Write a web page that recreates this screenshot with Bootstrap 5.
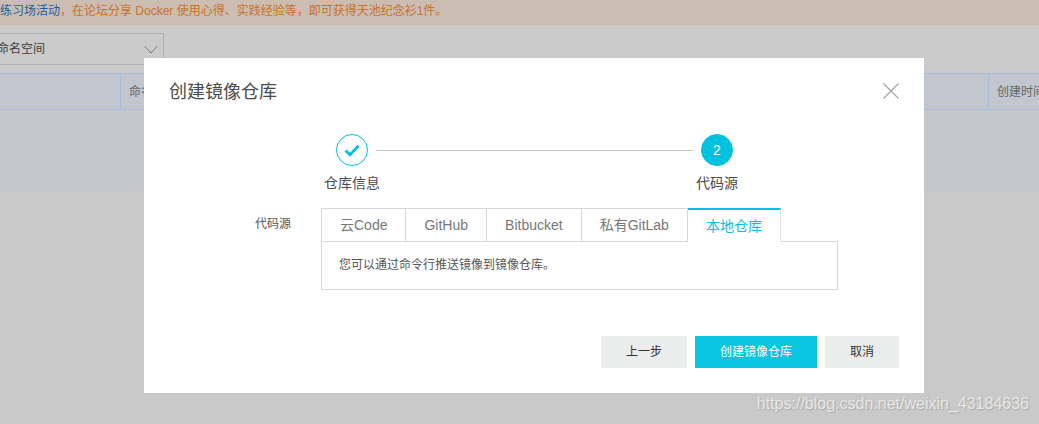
<!DOCTYPE html>
<html lang="en">
<head>
  <meta charset="UTF-8" />
  <meta name="viewport" content="width=device-width, initial-scale=1" />
  <title>创建镜像仓库</title>
  <link href="https://cdn.jsdelivr.net/npm/bootstrap@5.3.3/dist/css/bootstrap.min.css" rel="stylesheet" />
  <style>
    html, body {
      height: 100%;
    }
    body {
      background: #c9c9c9;
      font-family: "Liberation Sans", "Noto Sans CJK SC", sans-serif;
      font-size: 12px;
      color: #333;
      overflow: hidden;
      position: relative;
    }
    .notice-bar {
      height: 25px;
      line-height: 23px;
      background: #cbbdb2;
      color: #c8722c;
      white-space: nowrap;
    }
    .notice-bar a {
      color: #1f5d9e;
      text-decoration: none;
    }
    .bg-panel {
      height: 167px;
      background: #cbcbcb;
      padding-top: 8px;
    }
    .ns-select {
      width: 167px;
      height: 32px;
      margin-left: -3px;
      border: 1px solid #aeaeae;
      border-left: 0;
      color: #3d3d3d;
    }
    .ns-select svg {
      margin-right: 5px;
    }
    .bg-thead {
      height: 37px;
      margin-top: 8px;
      background: #c1c6cf;
      border-top: 1px solid #a9bfd9;
      border-bottom: 1px solid #a9bfd9;
      color: #666;
    }
    .bg-thead div {
      padding-left: 8px;
    }
    .bg-tbody {
      height: 82px;
      background: #c5c6c8;
    }
    .th-first {
      width: 121px;
      border-right: 1px solid #a9bfd9;
    }
    .th-last {
      width: 51px;
      flex: none;
      white-space: nowrap;
      border-left: 1px solid #a9bfd9;
    }
    .dlg {
      position: absolute;
      left: 144px;
      top: 58px;
      width: 780px;
      height: 335px;
      background: #fff;
    }
    .dlg-head {
      height: 66px;
      padding: 0 25px;
    }
    .dlg-title {
      font-size: 18px;
      color: #4a4a4a;
      margin: 4px 0 0;
      font-weight: 400;
    }
    .stepper {
      width: 465px;
      margin: 10px 0 0 158px;
    }
    .step-item {
      width: 100px;
      position: relative;
      z-index: 1;
    }
    .step-dot {
      width: 32px;
      height: 32px;
      border-radius: 50%;
      border: 1px solid #00c1de;
      color: #00c1de;
    }
    .step-dot.on {
      background: #00c1de;
      color: #fff;
      font-size: 14px;
    }
    .step-name {
      font-size: 14px;
      line-height: 20px;
      margin-top: 7px;
      color: #4a4a4a;
    }
    .step-line {
      height: 1px;
      background: #c4c4c4;
      margin: 16px -26px 0;
    }
    .source-row {
      margin-top: 15px;
    }
    .source-label {
      width: 177px;
      padding: 7px 30px 0 0;
      line-height: 18px;
      text-align: right;
      color: #555;
    }
    .source-tabs {
      width: 517px;
    }
    .source-tabs .nav-tabs {
      border-bottom: 0;
      height: 34px;
      position: relative;
      z-index: 1;
    }
    .source-tabs .nav-link {
      height: 34px;
      padding: 0 18px;
      line-height: 33px;
      font-size: 14px;
      color: #777;
      margin: 0;
      border: 1px solid #d7d7d7;
      border-left: 0;
      border-radius: 0;
      background: #fff;
    }
    .source-tabs .nav-item:first-child .nav-link {
      border-left: 1px solid #d7d7d7;
    }
    .source-tabs .nav-link.active {
      color: #00c1de;
      border-top: 2px solid #00c1de;
      border-bottom-color: #fff;
      line-height: 32px;
    }
    .tab-box {
      height: 49px;
      margin-top: -1px;
      padding: 14px 17px;
      line-height: 18px;
      border: 1px solid #d7d7d7;
      color: #555;
    }
    .dlg-foot {
      margin-top: 46px;
      padding-right: 25px;
      gap: 8px;
    }
    .dlg-foot .btn {
      height: 32px;
      padding: 0;
      font-size: 12px;
      border: 0;
      border-radius: 0;
      color: #333;
      background: #ebecec;
    }
    .dlg-foot .btn.go {
      background: #09c5e0;
      color: #fff;
    }
    .btn-back { width: 86px; }
    .btn-make { width: 122px; }
    .btn-quit { width: 74px; }
    .watermark {
      position: absolute;
      right: 10px;
      top: 394px;
      font-size: 16px;
      line-height: 20px;
      color: #e6e6e6;
      text-shadow: 1px 1px 1px #a8a8a8;
    }
  </style>
</head>
<body>
  <!-- page behind the dialog -->
  <div class="notice-bar"><a href="#">练习场活动</a>，在论坛分享 Docker 使用心得、实践经验等，即可获得天池纪念衫1件。</div>
  <div class="bg-panel">
    <div class="ns-select d-flex align-items-center justify-content-between">
      <span>命名空间</span>
      <svg width="14" height="9" viewBox="0 0 14 9"><path d="M.5 1 7 8l6.5-7" fill="none" stroke="#777" stroke-width="1"/></svg>
    </div>
    <div class="bg-thead d-flex align-items-center">
      <div class="th-first h-100"></div>
      <div class="flex-fill">命名</div>
      <div class="th-last h-100 d-flex align-items-center">创建时间</div>
    </div>
    <div class="bg-tbody"></div>
  </div>

  <!-- dialog -->
  <div class="dlg">
    <div class="dlg-head d-flex align-items-center justify-content-between">
      <h5 class="dlg-title">创建镜像仓库</h5>
      <svg width="16" height="16" viewBox="0 0 16 16"><path d="M.5.5l15 15M15.5.5l-15 15" fill="none" stroke="#a3a3a3" stroke-width="1.2"/></svg>
    </div>

    <div class="stepper d-flex">
      <div class="step-item d-flex flex-column align-items-center">
        <div class="step-dot d-flex align-items-center justify-content-center">
          <svg width="16" height="13" viewBox="0 0 16 13"><path d="M1.5 6.5l4.5 4.2L14.5 1.8" fill="none" stroke="#00c1de" stroke-width="2.8"/></svg>
        </div>
        <div class="step-name">仓库信息</div>
      </div>
      <div class="step-line flex-fill"></div>
      <div class="step-item d-flex flex-column align-items-center">
        <div class="step-dot on d-flex align-items-center justify-content-center">2</div>
        <div class="step-name">代码源</div>
      </div>
    </div>

    <div class="source-row d-flex">
      <div class="source-label">代码源</div>
      <div class="source-tabs">
        <ul class="nav nav-tabs">
          <li class="nav-item"><a class="nav-link" href="#">云Code</a></li>
          <li class="nav-item"><a class="nav-link" href="#">GitHub</a></li>
          <li class="nav-item"><a class="nav-link" href="#">Bitbucket</a></li>
          <li class="nav-item"><a class="nav-link" href="#">私有GitLab</a></li>
          <li class="nav-item"><a class="nav-link active" href="#">本地仓库</a></li>
        </ul>
        <div class="tab-box">您可以通过命令行推送镜像到镜像仓库。</div>
      </div>
    </div>

    <div class="dlg-foot d-flex justify-content-end">
      <button type="button" class="btn btn-back">上一步</button>
      <button type="button" class="btn go btn-make">创建镜像仓库</button>
      <button type="button" class="btn btn-quit">取消</button>
    </div>
  </div>

  <div class="watermark">https://blog.csdn.net/weixin_43184636</div>

  <script src="https://cdn.jsdelivr.net/npm/bootstrap@5.3.3/dist/js/bootstrap.bundle.min.js"></script>
</body>
</html>
